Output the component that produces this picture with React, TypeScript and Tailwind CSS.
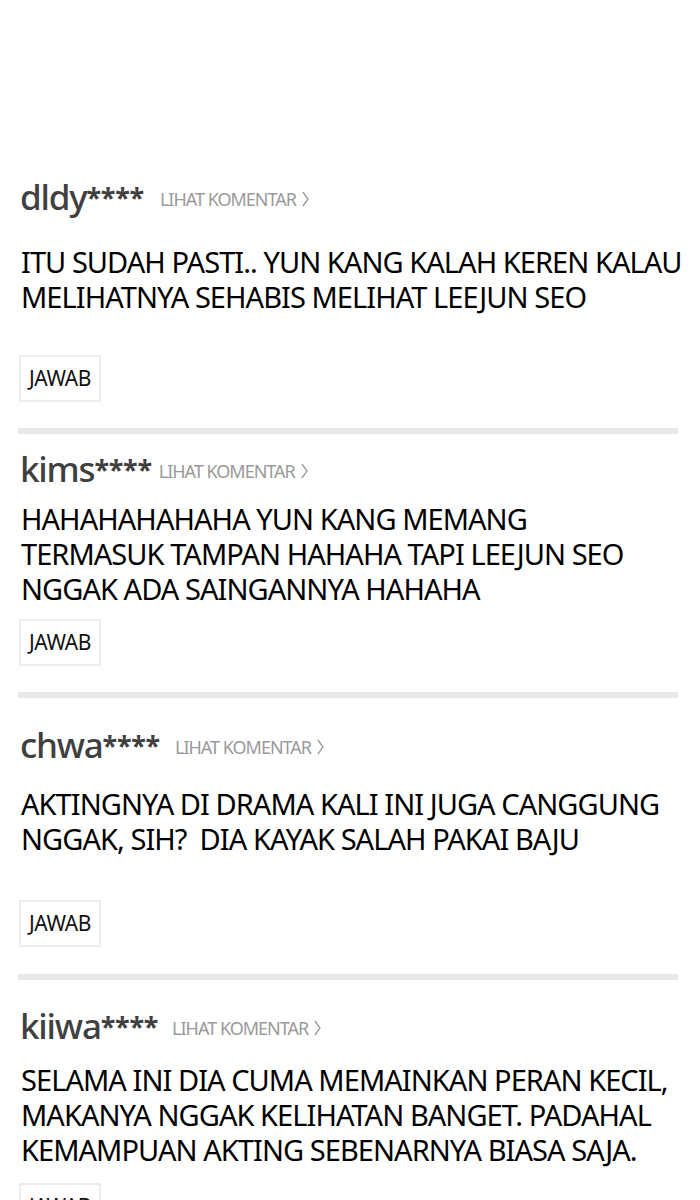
import React from "react";

type Comment = {
  user: string;
  lines: string[];
  userGap: string; // space above username
  textGap: string; // space between username and text
  btnGap: string; // space between text and JAWAB
  linkGap: string;
  lineGap?: string;
};

const comments: Comment[] = [
  {
    user: "dldy",
    lines: ["ITU SUDAH PASTI.. YUN KANG KALAH KEREN KALAU", "MELIHATNYA SEHABIS MELIHAT LEEJUN SEO"],
    userGap: "mt-[177px]",
    textGap: "mt-[27px]",
    btnGap: "mt-[41px]",
    linkGap: "ml-[16px]",
    lineGap: "mt-[26px]",
  },
  {
    user: "kims",
    lines: [
      "HAHAHAHAHAHA YUN KANG MEMANG",
      "TERMASUK TAMPAN HAHAHA TAPI LEEJUN SEO",
      "NGGAK ADA SAINGANNYA HAHAHA",
    ],
    userGap: "mt-[15px]",
    textGap: "mt-[12px]",
    btnGap: "mt-[13px]",
    linkGap: "ml-[7px]",
    lineGap: "mt-[26px]",
  },
  {
    user: "chwa",
    lines: ["AKTINGNYA DI DRAMA KALI INI JUGA CANGGUNG", "NGGAK, SIH?  DIA KAYAK SALAH PAKAI BAJU"],
    userGap: "mt-[27px]",
    textGap: "mt-[21px]",
    btnGap: "mt-[44px]",
    linkGap: "ml-[15px]",
    lineGap: "mt-[27px]",
  },
  {
    user: "kiiwa",
    lines: [
      "SELAMA INI DIA CUMA MEMAINKAN PERAN KECIL,",
      "MAKANYA NGGAK KELIHATAN BANGET. PADAHAL",
      "KEMAMPUAN AKTING SEBENARNYA BIASA SAJA.",
    ],
    userGap: "mt-[26px]",
    textGap: "mt-[16px]",
    btnGap: "mt-[16px]",
    linkGap: "ml-[14px]",
  },
];

const Chevron = () => (
  <svg width="8" height="16" viewBox="0 0 8 16" className="ml-[6px] mt-[1px]">
    <polyline points="1,1 6,8 1,15" fill="none" stroke="#9a9a9a" strokeWidth="1.3" />
  </svg>
);

function CommentBlock({ c }: { c: Comment }) {
  return (
    <div className="flex flex-col">
      <div className={`${c.userGap} flex h-[40px] items-center pl-[20px]`}>
        <span className="text-[35px] font-medium leading-[40px] tracking-[-1.2px] text-[#404040]">{c.user}</span>
        <span className="mt-[2px] text-[27px] font-bold leading-[40px] tracking-[-0.3px] text-[#404040]">****</span>
        <span className={`${c.linkGap} mt-[3px] flex items-center text-[18px] leading-[40px] tracking-[-1px] text-[#9a9a9a]`}>
          LIHAT KOMENTAR
          <Chevron />
        </span>
      </div>
      <div className={`${c.textGap} pl-[21px] text-[29px] leading-[35px] tracking-[-0.95px] text-black`}>
        {c.lines.map((l, i) => (
          <p key={i} className="whitespace-pre">
            {l}
          </p>
        ))}
      </div>
      <div className={`${c.btnGap} pl-[19px]`}>
        <div className="flex h-[47px] w-[82px] items-center justify-center border-2 border-[#ececec] text-[21px] tracking-[-0.4px] text-[#111111]">
          JAWAB
        </div>
      </div>
      {c.lineGap && <div className={`${c.lineGap} ml-[18px] h-[6px] w-[660px] bg-[#e8e8e8]`} />}
    </div>
  );
}

export default function App() {
  return (
    <div className="h-[1200px] w-[700px] overflow-hidden bg-white font-['Noto_Sans',sans-serif]">
      {comments.map((c) => (
        <CommentBlock key={c.user} c={c} />
      ))}
    </div>
  );
}
